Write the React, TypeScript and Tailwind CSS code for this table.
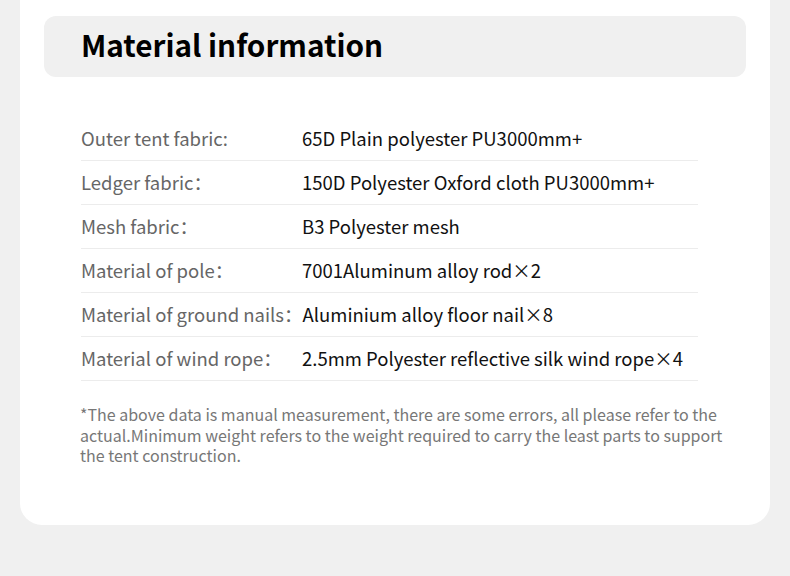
import React from 'react';

const rows: { label: string; value: string }[] = [
  { label: 'Outer tent fabric:', value: '65D Plain polyester PU3000mm+' },
  { label: 'Ledger fabric：', value: '150D Polyester Oxford cloth PU3000mm+' },
  { label: 'Mesh fabric：', value: 'B3 Polyester mesh' },
  { label: 'Material of pole：', value: '7001Aluminum alloy rod×2' },
  { label: 'Material of ground nails：', value: 'Aluminium alloy floor nail×8' },
  { label: 'Material of wind rope：', value: '2.5mm Polyester reflective silk wind rope×4' },
];

export default function App() {
  return (
    <div className="w-[790px] h-[576px] bg-[#f0f0f0] overflow-hidden font-['Noto_Sans_CJK_SC','Noto_Sans',sans-serif]">
      <div className="mx-[20px] h-[525px] bg-white rounded-b-[22px] pt-[16px]">
        {/* Title bar */}
        <div className="mx-[24px] h-[61px] bg-[#f0f0f0] rounded-[12px] flex items-center pl-[37px]">
          <h1 className="text-[29.7px] font-bold text-black leading-none pb-[3px]">Material information</h1>
        </div>

        {/* Spec rows */}
        <div className="ml-[61px] w-[617px] mt-[40px]">
          {rows.map((r) => (
            <div key={r.label} className="h-[44px] flex items-center border-b border-[#ececec] text-[18.5px] leading-none pb-[1px]">
              <span className="min-w-[221px] whitespace-nowrap shrink-0 text-[#666]">{r.label}</span>
              <span className="text-[#111] whitespace-nowrap">{r.value}</span>
            </div>
          ))}
        </div>

        {/* Footnote */}
        <p className="ml-[60px] w-[655px] mt-[23px] text-[16px] leading-[20.5px] text-[#777]">
          *The above data is manual measurement, there are some errors, all please refer to the actual.Minimum weight refers to the weight required to carry the least parts to support the tent construction.
        </p>
      </div>
    </div>
  );
}
